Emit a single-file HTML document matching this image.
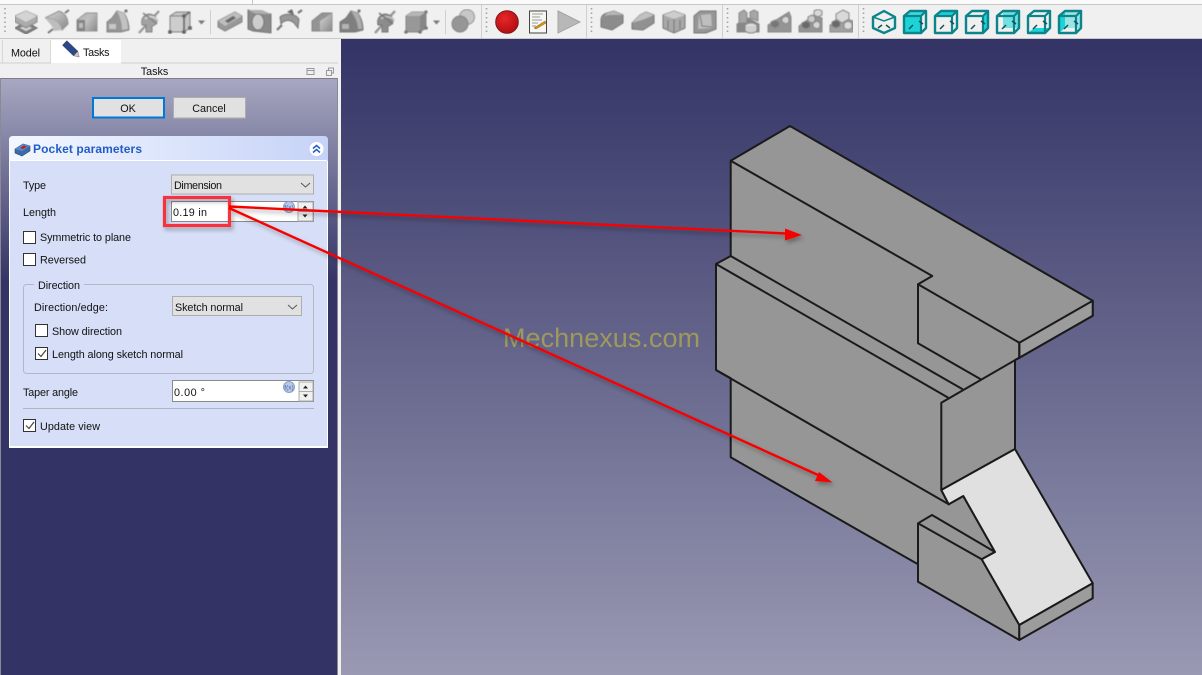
<!DOCTYPE html>
<html><head><meta charset="utf-8"><style>
html,body{margin:0;padding:0;width:1202px;height:675px;overflow:hidden;background:#f0f0f0}
svg{display:block}
text{font-family:"Liberation Sans",sans-serif;font-size:10.8px;fill:#111}
</style></head><body>
<svg width="1202" height="675" viewBox="0 0 1202 675" xmlns="http://www.w3.org/2000/svg">
<defs>
<linearGradient id="bg3d" gradientUnits="userSpaceOnUse" x1="0" y1="39" x2="0" y2="675"><stop offset="0" stop-color="#333366"/><stop offset="1" stop-color="#9999b3"/></linearGradient>
<linearGradient id="bgp" gradientUnits="userSpaceOnUse" x1="0" y1="78" x2="0" y2="282"><stop offset="0" stop-color="#a8a8c2"/><stop offset="1" stop-color="#333366"/></linearGradient>
<linearGradient id="hdr" x1="0" y1="0" x2="1" y2="0"><stop offset="0" stop-color="#f4f7ff"/><stop offset="1" stop-color="#c6d3f7"/></linearGradient>
<linearGradient id="ig" x1="0" y1="0" x2="1" y2="1"><stop offset="0" stop-color="#dcdcdc"/><stop offset="1" stop-color="#7c7c7c"/></linearGradient>
<radialGradient id="rec" cx=".4" cy=".35" r=".7"><stop offset="0" stop-color="#e8262a"/><stop offset="1" stop-color="#b00d10"/></radialGradient>
<filter id="sh" x="-5%" y="-20%" width="110%" height="140%"><feDropShadow dx="2" dy="3" stdDeviation="2" flood-color="#000" flood-opacity=".3"/></filter>
<filter id="soft" x="0" y="0" width="100%" height="100%" color-interpolation-filters="sRGB"><feGaussianBlur stdDeviation=".45"/><feComponentTransfer><feFuncR type="linear" slope=".82" intercept=".14"/><feFuncG type="linear" slope=".82" intercept=".14"/><feFuncB type="linear" slope=".82" intercept=".14"/></feComponentTransfer></filter>
<filter id="soft2" x="-5%" y="-5%" width="110%" height="110%"><feGaussianBlur stdDeviation=".3"/></filter>
<g id="cube"><path d="M-11 -6 L-5 -11 H11 V6 L6 11 H-11Z" fill="none" stroke="#0f8489" stroke-width="2.4" stroke-linejoin="round"/><path d="M-11 -6 H6 V11 M6 -6 L11 -11" fill="none" stroke="#0f8489" stroke-width="2.2"/><path d="M-6 7 L-2 3 M8 2 L4 -1" stroke="#124f55" stroke-width="1.5"/></g>
<g id="grip"><path d="M0 0V27" stroke="#a4a4a4" stroke-width="1.6" stroke-dasharray="1.5 3"/></g>
</defs>

<rect width="1202" height="675" fill="#f0f0f0"/>
<rect x="0" y="0" width="1202" height="4" fill="#fafafa"/>
<rect x="0" y="4" width="1202" height="1" fill="#c6c6c6"/>
<rect x="252" y="0" width="1" height="4" fill="#c6c6c6"/>
<rect x="0" y="38" width="1202" height="1" fill="#c8c8c8"/>
<rect x="341" y="39" width="861" height="636" fill="url(#bg3d)"/>

<g fill="#d0d0d0">
<rect x="481" y="5" width="1" height="33"/><rect x="586" y="5" width="1" height="33"/><rect x="722" y="5" width="1" height="33"/><rect x="858" y="5" width="1" height="33"/>
<rect x="210" y="10" width="1" height="24"/><rect x="445" y="10" width="1" height="24"/>
</g>
<use href="#grip" x="5" y="8"/><use href="#grip" x="486.500" y="8"/><use href="#grip" x="591.500" y="8"/><use href="#grip" x="727.500" y="8"/><use href="#grip" x="863.500" y="8"/>

<g filter="url(#soft)">
<g transform="translate(26,21)"><path d="M-11 7 L0 1 L11 7 L0 13Z" fill="#777" stroke="#555"/><path d="M-6 7 L0 4 L6 7 L0 10Z" fill="#ddd"/><path d="M-11 -5 L0 -10 L11 -5 V1 L0 7 L-11 1Z" fill="#a5a5a5" stroke="#7a7a7a"/><path d="M-11 -5 L0 -10 L11 -5 L0 1Z" fill="#d8d8d8"/></g>
<g transform="translate(57,21)"><path d="M-12 -3 L2 -10 C8 -8 11 -3 11 3 L5 9 C3 0 -4 -3 -12 -3Z" fill="url(#ig)" stroke="#888"/><path d="M-4 8 L-9 12 M8 -8 L12 -11" stroke="#666" stroke-width="2"/><path d="M-12 -3 C-4 -3 3 0 5 9 L-3 10 C-4 5 -8 2 -12 -3Z" fill="#bbb"/></g>
<g transform="translate(87,21)"><path d="M-10 -1 L-1 -8 H10 V10 H-10Z" fill="#b9b9b9" stroke="#888"/><path d="M-10 -1 H-2 V10 H-10Z" fill="#777"/><path d="M-2 -1 L10 -8 V10 H-2Z" fill="url(#ig)"/><rect x="-8" y="2" width="4" height="5" fill="#bbb"/></g>
<g transform="translate(118,21)"><path d="M-11 1 L-6 -3 L-1 -10 L6 -8 C10 -2 11 4 11 9 L3 11 H-11Z" fill="#8c8c8c" stroke="#777"/><path d="M-1 -10 L6 -8 C9 -2 10 3 10 8 L4 9 C4 2 2 -4 -1 -10Z" fill="#c2c2c2"/><rect x="-9" y="3" width="7" height="5" fill="#c8c8c8"/><circle cx="8" cy="-10" r="1.6" fill="#666"/></g>
<g transform="translate(149,21)"><path d="M-10 12 L10 -10" stroke="#909090" stroke-width="2.4"/><path d="M-7 4 C-9 -4 -2 -9 4 -6 C10 -3 9 4 3 5 L3 11 L-3 11 L-3 4Z" fill="#9b9b9b" stroke="#777"/><path d="M-4 -2 C0 -6 8 -4 9 0" fill="none" stroke="#d8d8d8" stroke-width="2"/><path d="M-6 -8 L8 3" stroke="#777" stroke-width="1.5"/></g>
<g transform="translate(180,22)"><path d="M-10 -6 L-4 -10 H10 V6 L4 10 H-10Z" fill="#c4c4c4" stroke="#777"/><path d="M-10 -6 H4 V10 H-10Z" fill="#cfcfcf" stroke="#777"/><path d="M4 -6 V10 M4 -6 L10 -10" stroke="#555" stroke-width="1.6"/><g fill="#555"><circle cx="-10" cy="10" r="2"/><circle cx="4" cy="10" r="2"/><circle cx="10" cy="6" r="2"/><circle cx="4" cy="-6" r="2"/></g></g>
<path d="M198 20.500h7l-3.500 4z" fill="#666"/>
<g transform="translate(230,21)"><path d="M-12 0 L5 -9 L12 -5 V1 L-5 10 L-12 6Z" fill="#8e8e8e" stroke="#777"/><path d="M-12 0 L5 -9 L12 -5 L-5 5Z" fill="#bdbdbd"/><path d="M-5 0 L3 -5 L6 -3 L-2 2Z" fill="#555"/></g>
<g transform="translate(260,21)"><path d="M-12 -11 L11 -7 V12 L-7 10 L-12 8Z" fill="#7d7d7d" stroke="#666"/><path d="M-12 -11 H2 L11 -7 L-4 -7Z" fill="#aaa"/><ellipse cx="-2" cy="1" rx="6" ry="8" fill="#cfcfcf" stroke="#666"/></g>
<g transform="translate(290,21)"><path d="M-10 -4 C-6 -8 5 -8 9 -2 L8 7 L4 2 C0 -2 -6 -1 -9 3Z" fill="#8e8e8e" stroke="#666"/><path d="M-13 9 L-8 4 M8 -8 L12 -11" stroke="#666" stroke-width="2.200"/><path d="M-3 -9 L2 -12 L4 -6Z" fill="#555"/></g>
<g transform="translate(322,21)"><path d="M-10 0 L0 -8 H10 V10 H-10Z" fill="#8a8a8a" stroke="#777"/><path d="M-2 0 L10 -8 V10 H-2Z" fill="url(#ig)"/></g>
<g transform="translate(352,21)"><path d="M-12 1 L-6 -3 L-1 -10 L6 -8 C10 -2 11 4 11 9 L3 11 H-12Z" fill="#707070" stroke="#666"/><rect x="-10" y="3" width="7" height="5" fill="#b0b0b0"/><path d="M-1 -10 L6 -8 C9 -2 10 3 10 8 L6 8 C6 2 3 -4 -1 -10Z" fill="#a8a8a8"/><circle cx="7" cy="-10" r="1.600" fill="#666"/></g>
<g transform="translate(385,21)"><path d="M-10 12 L10 -10" stroke="#8a8a8a" stroke-width="2.400"/><path d="M-7 4 C-9 -4 -2 -9 4 -6 C10 -3 9 4 3 5 L3 11 L-3 11 L-3 4Z" fill="#808080" stroke="#666"/><path d="M-4 -2 C0 -6 8 -4 9 0" fill="none" stroke="#bdbdbd" stroke-width="2"/><path d="M-6 -8 L8 3" stroke="#666" stroke-width="1.500"/></g>
<g transform="translate(416,22)"><path d="M-10 -6 L-4 -10 H10 V6 L4 10 H-10Z" fill="#8f8f8f" stroke="#777"/><path d="M-10 -6 L-4 -10 H10 L4 -6Z" fill="#b4b4b4"/><path d="M4 -6 V10 L10 6 V-10Z" fill="#7a7a7a"/><g fill="#666"><circle cx="-10" cy="10" r="1.800"/><circle cx="4" cy="10" r="1.800"/><circle cx="10" cy="6" r="1.800"/><circle cx="10" cy="-10" r="1.600"/></g></g>
<path d="M433 20.500h7l-3.500 4z" fill="#666"/>
<g transform="translate(463,21)"><circle cx="4" cy="-4" r="7.500" fill="#c8c8c8" stroke="#888"/><circle cx="-3" cy="3" r="8" fill="#8c8c8c" stroke="#777"/></g>

<g transform="translate(612,21)"><path d="M-11 -1 C-11 -5 -8 -7 -5 -8 L2 -10 L11 -6 V2 L0 9 L-11 6Z" fill="#808080" stroke="#666"/><path d="M-11 -1 C-9 -5 -5 -6 0 -6 L11 -6 L2 -10 L-5 -8Z" fill="#b4b4b4"/></g>
<g transform="translate(643,21)"><path d="M-11 2 L-3 -6 L3 -9 L11 -6 V2 L0 9 L-11 8Z" fill="#868686" stroke="#666"/><path d="M-11 2 L-3 -6 L3 -9 L11 -6 L2 -2Z" fill="#c0c0c0"/></g>
<g transform="translate(674,21)"><path d="M-11 -6 L0 -10 L11 -6 V7 L0 12 L-11 7Z" fill="#a2a2a2" stroke="#666"/><path d="M-11 -6 L0 -10 L11 -6 L0 -2Z" fill="#cfcfcf"/><path d="M0 -2V12M-6 -1V8M6 -1V8" stroke="#6a6a6a"/></g>
<g transform="translate(705,21)"><path d="M-11 -5 L-5 -10 H11 V8 L1 12 H-11Z" fill="#8c8c8c" stroke="#666"/><path d="M-6 -6 L6 -7 L7 7 L-7 8Z" fill="#bdbdbd"/><path d="M-5 -6 L-3 5 L7 6" fill="none" stroke="#707070"/></g>

<g fill="#9f9f9f" stroke="#7c7c7c">
<g transform="translate(748,21)"><path d="M-11 11 V3 L0 -3 L11 3 V11Z" fill="#7a7a7a"/><path d="M-9 2 V-8 L-4 -11 L-1 -8 V2Z"/><path d="M2 -3 V-9 L6 -11 L10 -9 V0Z"/><ellipse cx="3" cy="5" rx="6" ry="3" fill="#e4e4e4"/><path d="M-3 5 V9 A6 3 0 0 0 9 9 V5" fill="#d2d2d2"/></g>
<g transform="translate(779,21)"><path d="M-11 11 V4 L10 -9 L12 -4 V11Z" fill="#8a8a8a"/><path d="M-8 1 L-4 -1 L0 1 L0 5 L-4 7 L-8 5Z" fill="#666"/><path d="M3 -3 L7 -5 L10 -3 V1 L7 3 L3 1Z" fill="#d8d8d8"/></g>
<g transform="translate(810,21)"><path d="M-11 11 V5 L4 -6 L12 -3 V11Z" fill="#8a8a8a"/><path d="M-8 2 L-4 0 L0 2 V6 L-4 8 L-8 6Z" fill="#555"/><path d="M-2 -4 L2 -6 L5 -4 V0 L2 2 L-2 0Z" fill="#ccc"/><path d="M4 -10 L8 -12 L12 -10 V-6 L8 -4 L4 -6Z" fill="#ddd"/><path d="M3 2 L7 0 L10 2 V6 L7 8 L3 6Z" fill="#d8d8d8"/></g>
<g transform="translate(841,21)"><path d="M-11 11 V4 L3 -3 L12 0 V11Z" fill="#9a9a9a"/><path d="M-5 -7 L2 -11 L8 -8 V-2 L1 2 L-5 -2Z" fill="#dedede"/><path d="M-9 1 L-5 -1 L-1 1 V5 L-5 7 L-9 5Z" fill="#555"/><path d="M3 2 L7 0 L11 2 V7 L7 9 L3 7Z" fill="#e0e0e0"/></g>
</g>
</g>

<circle cx="507" cy="22" r="11.300" fill="url(#rec)" stroke="#7e1a1a"/>
<g transform="translate(538,22)" filter="url(#soft2)"><rect x="-8.500" y="-11" width="17" height="22" fill="#f6f6f2" stroke="#444"/><path d="M-6 -8h11M-6 -5h8M-6 -2h10M-6 1h6M-6 4h4" stroke="#999"/><path d="M-4 6 L7 -1 L8 1 L-2 7Z" fill="#d8951e" stroke="#8a5a10" stroke-width=".5"/></g>
<path d="M558 11 L580 22 L558 33Z" fill="#b8b8b8" stroke="#a4a4a4"/>

<g filter="url(#soft2)">
<g transform="translate(884,22)"><path d="M0 -11 L11 -5 V6 L0 11 L-11 6 V-5Z" fill="none" stroke="#0f8489" stroke-width="2.400" stroke-linejoin="round"/><path d="M-11 -5 L0 -1 L11 -5" fill="none" stroke="#0f8489" stroke-width="1.500"/><path d="M-6 6 L-2 3 M6 6 L2 3" stroke="#124f55" stroke-width="1.500"/></g>
<g transform="translate(915,22)"><path d="M-11 -6 H6 V11 H-11Z" fill="#1dd3d8"/><path d="M-11 -6 L-5 -11 H11 L6 -6Z" fill="#1dd3d8" fill-opacity=".8"/><use href="#cube"/></g>
<g transform="translate(946,22)"><path d="M-11 -6 L-5 -11 H11 L6 -6Z" fill="#1dd3d8"/><use href="#cube"/></g>
<g transform="translate(977,22)"><path d="M6 -6 L11 -11 V6 L6 11Z" fill="#1dd3d8"/><use href="#cube"/></g>
<g transform="translate(1008,22)"><path d="M-5 -11 H11 V6 H-5Z" fill="#1dd3d8" fill-opacity=".6"/><use href="#cube"/></g>
<g transform="translate(1039,22)"><path d="M-11 11 L-5 6 H11 L6 11Z" fill="#1dd3d8"/><use href="#cube"/></g>
<g transform="translate(1070,22)"><path d="M-11 -6 L-5 -11 V6 L-11 11Z" fill="#1dd3d8"/><path d="M-5 6 V-11 H11 V6Z" fill="#1dd3d8" fill-opacity=".4"/><use href="#cube"/></g>
</g>

<!-- tabs -->
<rect x="2" y="40" width="1" height="23" fill="#d8d8d8"/>
<rect x="50" y="40" width="1" height="23" fill="#d8d8d8"/>
<rect x="51" y="40" width="70" height="23" fill="#fff"/>
<rect x="0" y="62.500" width="51" height="1" fill="#d0d0d0"/><rect x="121" y="62.500" width="217" height="1" fill="#d0d0d0"/>
<text x="11" y="56.500" textLength="29">Model</text>
<text x="83" y="56" textLength="26.500">Tasks</text>
<g transform="translate(72,50) rotate(44)" filter="url(#soft2)"><rect x="-10" y="-3" width="15" height="6" fill="#2c4a86" stroke="#1d2e58" stroke-width=".6"/><path d="M5 -3 L10 0 L5 3Z" fill="#ccc" stroke="#444" stroke-width=".5"/></g>
<text x="154.500" y="75" text-anchor="middle">Tasks</text>
<path d="M307 68.500h7v6h-7zM307 70.500h7" fill="none" stroke="#999"/>
<path d="M326.500 70.500h5v5h-5zM328.500 70v-2h5v5h-2" fill="none" stroke="#999"/>

<!-- task panel -->
<rect x="0" y="78" width="337" height="597" fill="url(#bgp)"/>
<rect x="0" y="78" width="337" height="1" fill="#7d7d8a"/>
<rect x="0" y="78" width="1" height="597" fill="#8a8a94"/>
<rect x="337" y="78" width="1" height="597" fill="#8a8a94"/>

<rect x="93" y="98" width="71" height="19.500" fill="#e1e1e1" stroke="#0078d7" stroke-width="2"/>
<text x="128" y="112" text-anchor="middle">OK</text>
<rect x="173.500" y="97.500" width="72" height="20.500" fill="#e1e1e1" stroke="#adadad"/>
<text x="209" y="112" text-anchor="middle">Cancel</text>

<!-- group -->
<path d="M9 447.500 V140 Q9 136 13 136 H324 Q328 136 328 140 V447.500Z" fill="url(#hdr)"/>
<rect x="10" y="161" width="317" height="285.500" fill="#d6dff7"/>
<rect x="9" y="161" width="1" height="286" fill="#fff"/><rect x="327" y="161" width="1" height="286" fill="#fff"/><rect x="9" y="446" width="319" height="2" fill="#fff"/><rect x="10" y="160" width="317" height="1" fill="#fff"/>
<g transform="translate(23,149)"><path d="M-8 0 L0 -5 L7 -3 V2 L-1 7 L-8 4Z" fill="#3c6aa8" stroke="#2a4a78" stroke-width=".6"/><path d="M-8 0 L0 -5 L7 -3 L-1 2Z" fill="#5c8ac8"/><path d="M-3 -1 L1 -3.500 L4 -2.500 L0 0Z" fill="#b22"/></g>
<text x="33" y="153" textLength="109" style="font-weight:bold;font-size:12px;fill:#215dc6">Pocket parameters</text>
<circle cx="316.500" cy="149" r="7.500" fill="#fff" stroke="#c6d3f7"/>
<path d="M313 148.500l3.500-3 3.500 3M313 152.500l3.500-3 3.500 3" fill="none" stroke="#215dc6" stroke-width="1.500"/>

<text x="23" y="189" textLength="23">Type</text>
<rect x="171.500" y="175" width="142" height="19" fill="#e1e1e1" stroke="#adadad"/>
<text x="174" y="189" textLength="48">Dimension</text>
<path d="M301 183l4.500 4 4.500-4" fill="none" stroke="#555"/>

<text x="23" y="216" textLength="33">Length</text>
<rect x="171.500" y="201.500" width="142" height="20" fill="#fff" stroke="#8a8a8a"/>
<text x="173" y="216" textLength="34">0.19 in</text>
<circle cx="289" cy="207" r="5.500" fill="#b8c8e8" stroke="#8aa0c8"/><text x="289" y="209.500" text-anchor="middle" style="font-size:6.500px;fill:#4a66a0">f(x)</text>
<rect x="298" y="202" width="15" height="9.500" fill="#f0f0f0" stroke="#adadad"/><rect x="298" y="211.500" width="15" height="9.500" fill="#f0f0f0" stroke="#adadad"/>
<path d="M302.500 208.500h5l-2.500-3zM302.500 214.500h5l-2.500 3z" fill="#222"/>

<rect x="23.500" y="231.500" width="12" height="12" fill="#fff" stroke="#333"/>
<text x="40" y="241" textLength="91">Symmetric to plane</text>
<rect x="23.500" y="253.500" width="12" height="12" fill="#fff" stroke="#333"/>
<text x="40" y="263.500" textLength="46">Reversed</text>

<rect x="23.500" y="284.500" width="290" height="89" rx="3" fill="none" stroke="#b4b8c4"/>
<rect x="34" y="280" width="50" height="10" fill="#d6dff7"/>
<text x="38" y="289" textLength="42">Direction</text>
<text x="34" y="311" textLength="74">Direction/edge:</text>
<rect x="172.500" y="296.500" width="129" height="19" fill="#e1e1e1" stroke="#adadad"/>
<text x="175" y="311" textLength="68">Sketch normal</text>
<path d="M288 305l4.500 4 4.500-4" fill="none" stroke="#555"/>
<rect x="35.500" y="324.500" width="12" height="12" fill="#fff" stroke="#333"/>
<text x="52" y="335" textLength="70">Show direction</text>
<rect x="35.500" y="347.500" width="12" height="12" fill="#fff" stroke="#333"/>
<path d="M38 353.500l3 3 5-6.500" fill="none" stroke="#444" stroke-width="1.200"/>
<text x="52" y="358" textLength="131">Length along sketch normal</text>

<text x="23" y="396" textLength="55">Taper angle</text>
<rect x="172.500" y="380.500" width="141" height="21" fill="#fff" stroke="#8a8a8a"/>
<text x="174" y="396" textLength="31">0.00 °</text>
<circle cx="289" cy="387" r="5.500" fill="#b8c8e8" stroke="#8aa0c8"/><text x="289" y="389.500" text-anchor="middle" style="font-size:6.500px;fill:#4a66a0">f(x)</text>
<rect x="299" y="382" width="14" height="9.500" fill="#f0f0f0" stroke="#adadad"/><rect x="299" y="391.500" width="14" height="9.500" fill="#f0f0f0" stroke="#adadad"/>
<path d="M303 388.500h5l-2.500-3zM303 394.500h5l-2.500 3z" fill="#222"/>
<rect x="23" y="408" width="291" height="1" fill="#b0b4c0"/>
<rect x="23.500" y="419.500" width="12" height="12" fill="#fff" stroke="#333"/>
<path d="M26 425.500l3 3 5-6.500" fill="none" stroke="#444" stroke-width="1.200"/>
<text x="40" y="430" textLength="60">Update view</text>

<!-- 3D model -->
<g stroke="#1a1a1a" stroke-width="2" stroke-linejoin="round" fill="#969696">
<path d="M790 126 L1092.700 300.700 V315.700 L1019.300 357.700 L1015 360 V449 L941.300 490 L948.700 504.300 L963.300 496 L995 552 L981.700 559.300 L1019.300 625 V640 L918 581.700 V564.300 L730.700 457.300 V378.300 L716 370 V264 L730.700 256 V160.700Z"/>
<path d="M1015 449 L1092.700 583.300 L1019.300 625 L981.700 559.300 L995 552 L963.300 496 L948.700 504.300 L941.300 490Z" fill="#e0e0e0"/>
<path d="M1092.700 583.300 V598.300 L1019.300 640 V625Z" fill="#9c9c9c"/>
<path d="M1019.300 342.700 L1092.700 300.700 V315.700 L1019.300 357.700Z" fill="#9c9c9c"/>
<g fill="none">
<path d="M730.700 160.700 L932.300 276 L918 284.300 L1019.300 342.700 V357.700"/>
<path d="M918 284.300 V343.300 L980.700 379.300"/>
<path d="M730.700 256 L962.700 389.300"/>
<path d="M716 264 L948.300 397.700"/>
<path d="M1019.300 357.700 L941.300 402.700 V490"/>
<path d="M716 370 L948.700 504.300"/>
<path d="M918 564.300 V523.300 L932 515 L995 552"/>
<path d="M918 523.300 L981.700 559.300"/>
</g>
</g>

<!-- watermark -->
<text x="503" y="347" textLength="197" style="font-size:27px;fill:#a8a254;fill-opacity:.85">Mechnexus.com</text>

<!-- annotations -->
<g filter="url(#sh)">
<rect x="164.500" y="197.500" width="65" height="28" fill="none" stroke="#f5333c" stroke-width="3.200"/>
<path d="M229 206.500 L786 233.500" stroke="#f80000" stroke-width="2.400" fill="none"/>
<path d="M785 228.500 L802 235 L785 240.500Z" fill="#f80000"/>
<path d="M229 208 L818 475" stroke="#f80000" stroke-width="2.400" fill="none"/>
<path d="M819 472 L832.500 482.500 L815 481Z" fill="#f80000"/>
</g>
</svg>
</body></html>
